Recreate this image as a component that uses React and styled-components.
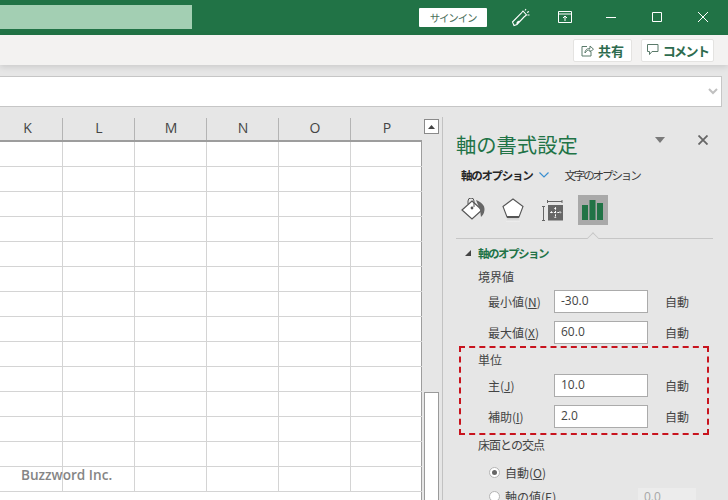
import React from "react";
import styled, { createGlobalStyle } from "styled-components";

const Global = createGlobalStyle`
  html, body { margin: 0; padding: 0; background: #e6e6e6; }
  body { font-family: "Noto Sans CJK JP", "Noto Sans", sans-serif; }
`;
const Page = styled.div`position: relative; width: 728px; height: 500px; overflow: hidden; display: flex; flex-direction: column; background: #e6e6e6;`;
const TitleBar = styled.div`height: 35px; flex: none; background: #217346; display: flex; align-items: center;`;
const SearchBox = styled.div`width: 192px; height: 24px; margin-top: -1px; background: #a3cfb3;`;
const SignIn = styled.div`margin-left: 227px; margin-top: -1px; width: 68px; height: 19px; background: #fff; border-radius: 1px; color: #4b6f5b; font-size: 10.5px; letter-spacing: -1.2px; line-height: 19px; text-align: center;`;
const TitleIcon = styled.svg`flex: none; margin-left: ${p => p.$ml}px; margin-top: -1px; display: block;`;
const Ribbon = styled.div`height: 30px; flex: none; background: #f3f2f1; display: flex; align-items: center; justify-content: flex-end; gap: 9px; padding-right: 14px; box-sizing: border-box; box-shadow: 0 2px 6px rgba(0,0,0,.12); position: relative; z-index: 1;`;
const RibbonButton = styled.div`height: 23px; width: ${p => p.$w}px; box-sizing: border-box; background: #fff; border: 1px solid #e4e3e1; border-radius: 2px; display: flex; align-items: center; justify-content: center; gap: 4px; color: #2d6b4e; font-size: 13px; font-weight: 700; letter-spacing: ${p => p.$ls || 0}px;`;
const FormulaBar = styled.div`height: 31px; flex: none; margin: 11px 6px 0 0; box-sizing: border-box; background: #fff; border: 1px solid #c6c6c6; border-left: 0; display: flex; align-items: center; justify-content: flex-end; padding-right: 3px;`;
const Main = styled.div`flex: 1; display: flex; min-height: 0; margin-top: 10px;`;
const Sheet = styled.div`width: 422px; flex: none; display: flex; flex-direction: column; overflow: hidden;`;
const ColumnHeader = styled.div`height: 25px; flex: none; box-sizing: border-box; display: grid; grid-template-columns: 63px repeat(5, 72px) 71px; background: #e6e6e6; border-bottom: 2px solid #9d9d9d;`;
const ColumnCell = styled.div`box-sizing: border-box; font-family: "Open Sans", sans-serif; font-size: 14px; color: #444; text-align: center; line-height: 22px; position: relative; &:first-child { padding-right: 8px; } &:not(:last-child)::after { content: ""; position: absolute; right: 0; bottom: 0; top: 1px; width: 1px; background: #b4b4b4; }`;
const Grid = styled.div`flex: 1; display: grid; grid-template-columns: 63px repeat(5, 72px) 71px; grid-auto-rows: 25px; background: #fff; border-right: 1px solid #9d9d9d; align-content: start; width: 422px; box-sizing: border-box;`;
const GridCell = styled.div`box-sizing: border-box; border-right: 1px solid #d4d4d4; border-bottom: 1px solid #d4d4d4;`;
const ScrollBar = styled.div`width: 20px; flex: none; box-sizing: border-box; padding: 2px 0 0 2px; display: flex; flex-direction: column; justify-content: space-between;`;
const ScrollButton = styled.div`width: 15px; height: 15px; box-sizing: border-box; background: #fff; border: 1px solid #8a8a8a; display: flex; align-items: center; justify-content: center;`;
const ScrollThumb = styled.div`width: 15px; height: 108px; box-sizing: border-box; background: #fff; border: 1px solid #9a9a9a; border-bottom: 0;`;
const Pane = styled.div`flex: 1; box-sizing: border-box; border-left: 1px solid #c2c2c2; padding: 0 15px 0 13px; display: flex; flex-direction: column; overflow: hidden;`;
const PaneHead = styled.div`height: 36px; margin-top: 9px; flex: none; display: flex; align-items: center;`;
const PaneTitle = styled.div`flex: 1; font-size: 20.3px; line-height: 36px; color: #217346; white-space: nowrap; font-weight: 400;`;
const PaneTabs = styled.div`height: 20px; margin-top: 3px; flex: none; display: flex; align-items: center; padding-left: 5px; font-size: 11.5px; color: #333;`;
const TabActive = styled.div`font-weight: 700; color: #262626; letter-spacing: -1.3px;`;
const TabOther = styled.div`margin-left: 15px; letter-spacing: -2.1px; color: #3a3a3a;`;
const IconRow = styled.div`margin-top: 10px; height: 30px; flex: none; display: flex; align-items: center; padding-left: 2px; gap: 10px;`;
const IconSlot = styled.div`width: 30px; height: 30px; display: flex; align-items: center; justify-content: center; background: ${p => (p.$active ? "#a9a9a9" : "transparent")};`;
const Divider = styled.div`position: relative; margin-top: 13px; height: 1px; flex: none; background: #c6c6c6; width: 257px;
  &::after { content: ""; position: absolute; left: 132px; top: -5px; width: 9px; height: 9px; background: #e6e6e6; border-left: 1px solid #c6c6c6; border-top: 1px solid #c6c6c6; transform: rotate(45deg) scale(.8); }`;
const SectionHead = styled.div`margin-top: 4px; height: 20px; flex: none; display: flex; align-items: center; padding-left: 9px; gap: 7px; color: #217346; font-size: 11.5px; font-weight: 700; letter-spacing: -1.5px;`;
const Label = styled.div`margin: ${p => p.$m || "0"}; padding-left: ${p => p.$pl ?? 22}px; height: 18px; flex: none; line-height: 18px; font-size: 12px; letter-spacing: ${p => p.$ls || 0}px; color: #444;`;
const Row = styled.div`height: 23px; flex: none; display: flex; align-items: center; padding-left: 32px; margin-top: ${p => p.$mt}px; font-size: 12px; color: #444;`;
const RowLabel = styled.div`width: 66px; flex: none; white-space: nowrap; u { text-underline-offset: 1px; }`;
const Field = styled.div`width: 94px; height: 23px; flex: none; box-sizing: border-box; background: #fff; border: 1px solid #ababab; padding-left: 6px; font-family: "Open Sans", sans-serif; font-size: 12px; line-height: 19px; color: #444;`;
const Auto = styled.div`margin-left: 17px; white-space: nowrap;`;
const Highlight = styled.div`margin: 2px 0 0 3px; width: 250px; height: 89px; flex: none; box-sizing: border-box; border: 2px dashed #c8141e; padding-top: 3px; margin-bottom: 0;`;
const HighlightRow = styled(Row)`padding-left: 27px; margin-top: ${p => p.$mt}px;`;
const HighlightLabel = styled(Label)`padding-left: 17px;`;
const RadioRow = styled.div`position: relative; height: 18px; flex: none; display: flex; align-items: center; gap: 5px; padding-left: 33px; margin-top: ${p => p.$mt}px; font-size: 12px; color: #444; u { text-underline-offset: 1px; }`;
const Radio = styled.div`width: 11px; height: 11px; border-radius: 50%; box-sizing: border-box; flex: none; background: #fff; border: 1px solid #b5b5b5; display: flex; align-items: center; justify-content: center; &::after { content: ""; display: ${p => (p.$on ? "block" : "none")}; width: 5px; height: 5px; border-radius: 50%; background: #666; }`;
const RadioText = styled.div`white-space: nowrap;`;
const DisabledField = styled.div`position: absolute; left: 182px; top: 1px; width: 58px; height: 23px; box-sizing: border-box; background: #ececec; padding-left: 6px; color: #a6a6a6; font-family: "Open Sans", sans-serif; font-size: 12px; line-height: 18px;`;
const Watermark = styled.div`position: absolute; left: 21px; top: 466px; font-family: "Open Sans", sans-serif; font-size: 13.6px; font-weight: 600; line-height: 18px; color: #858585;`;

const cols = ["K", "L", "M", "N", "O", "P", ""];
const cells = Array.from({ length: 98 });

export default function App() {
  return (
    <Page>
      <Global />
      <TitleBar>
        <SearchBox />
        <SignIn>サインイン</SignIn>
        <TitleIcon $ml={24} width="20" height="20" viewBox="0 0 20 20" fill="none" stroke="#fff" strokeWidth="1.1">
          <path d="M1.5 15 L10 6.5 L12 4 L15.5 8 L13 10 L6 17.5 L3 18.5 Z M6 17.5 C5.5 15.5 7 14 9.5 14 M14 3.5 L15 2 M16 5.5 L18 4.5 M16.5 8 H18.5" />
        </TitleIcon>
        <TitleIcon $ml={27} width="14" height="12" viewBox="0 0 14 12" fill="none" stroke="#fff" strokeWidth="1">
          <path d="M.5 .5 H13.5 V11.5 H.5 Z M.5 3 H13.5 M7 10 V5 M5 7 L7 5 L9 7" />
        </TitleIcon>
        <TitleIcon $ml={34} width="10" height="10" viewBox="0 0 10 10" stroke="#fff" fill="none"><path d="M0 5.5 H10" /></TitleIcon>
        <TitleIcon $ml={36} width="10" height="10" viewBox="0 0 10 10" stroke="#fff" fill="none"><path d="M.5 .5 H9.5 V9.5 H.5 Z" /></TitleIcon>
        <TitleIcon $ml={36} width="10" height="10" viewBox="0 0 10 10" stroke="#fff" fill="none"><path d="M0 0 L10 10 M10 0 L0 10" /></TitleIcon>
      </TitleBar>
      <Ribbon>
        <RibbonButton $w={59}>
          <svg width="13" height="13" viewBox="0 0 13 13" fill="none" stroke="#5a7a6a" strokeWidth="1"><path d="M6 2.5 H1 V12 H10 V8 M4 9 C4 5 7 4.5 9 4.5 V2 L12.5 5.2 L9 8 V6 C7 6 5.5 6.5 4 9 Z" /></svg>
          共有
        </RibbonButton>
        <RibbonButton $w={73} $ls={-1.6}>
          <svg width="12" height="12" viewBox="0 0 12 12" fill="none" stroke="#5a7a6a" strokeWidth="1"><path d="M.5 .5 H11 V7.5 H5 L2.5 10.5 V7.5 H.5 Z" /></svg>
          コメント
        </RibbonButton>
      </Ribbon>
      <FormulaBar>
        <svg width="10" height="7" viewBox="0 0 10 7" fill="none" stroke="#c0c0c0" strokeWidth="2"><path d="M1 1 L5 5 L9 1" /></svg>
      </FormulaBar>
      <Main>
        <Sheet>
          <ColumnHeader>
            {cols.map((c, i) => <ColumnCell key={i}>{c}</ColumnCell>)}
          </ColumnHeader>
          <Grid>
            {cells.map((_, i) => <GridCell key={i} />)}
          </Grid>
        </Sheet>
        <ScrollBar>
          <ScrollButton>
            <svg width="7" height="4" viewBox="0 0 7 4"><path d="M3.5 0 L7 4 H0 Z" fill="#444" /></svg>
          </ScrollButton>
          <ScrollThumb />
        </ScrollBar>
        <Pane>
          <PaneHead>
            <PaneTitle>軸の書式設定</PaneTitle>
            <svg width="10" height="6" viewBox="0 0 10 6" style={{ marginRight: 33, marginTop: -8 }}><path d="M0 0 H10 L5 6 Z" fill="#7a7a7a" /></svg>
            <svg width="10" height="10" viewBox="0 0 10 10" fill="none" stroke="#666" strokeWidth="1.8" style={{ marginRight: 5, marginTop: -8 }}><path d="M.5 .5 L9.5 9.5 M9.5 .5 L.5 9.5" /></svg>
          </PaneHead>
          <PaneTabs>
            <TabActive>軸のオプション</TabActive>
            <svg width="10" height="6" viewBox="0 0 10 6" fill="none" stroke="#3a8fd0" strokeWidth="1.2" style={{ marginLeft: 7 }}><path d="M.5 .5 L5 5 L9.5 .5" /></svg>
            <TabOther>文字のオプション</TabOther>
          </PaneTabs>
          <IconRow>
            <IconSlot>
              <svg width="26" height="24" viewBox="0 0 26 24">
                <path d="M12 3 L22 12 L12 21 L2 12 Z" fill="#fff" stroke="#555" strokeWidth="1.2" />
                <path d="M8 6 V3 A3 3 0 0 1 14 3 V9" fill="none" stroke="#555" strokeWidth="1" />
                <circle cx="12" cy="10" r="1.4" fill="#555" />
                <path d="M16 2 C21 4 25 7 24.5 12 C24.2 16 22 18 21 19 L20 12 Z" fill="#666" />
              </svg>
            </IconSlot>
            <IconSlot>
              <svg width="24" height="26" viewBox="0 0 24 26">
                <defs>
                  <linearGradient id="shade" x1="0" y1="0" x2="0" y2="1"><stop offset="0" stopColor="#c4c4c4" /><stop offset="1" stopColor="#f0f0f0" /></linearGradient>
                </defs>
                <path d="M7 20 L5 25 H19 L17 20 Z" fill="url(#shade)" />
                <path d="M12 2 L22 9.5 L18 20 H6 L2 9.5 Z" fill="#fff" stroke="#555" strokeWidth="1.1" />
                <path d="M6 20 H18" stroke="#555" strokeWidth="2" />
              </svg>
            </IconSlot>
            <IconSlot>
              <svg width="24" height="24" viewBox="0 0 24 24">
                <path d="M6.5 2 V5 M6.5 3.5 H21 M21 2 V5 M1 8.5 H4 M2.5 8.5 V22.5 M1 22.5 H4" stroke="#666" fill="none" />
                <rect x="7" y="7" width="15" height="15.5" fill="#666" />
                <path d="M14.5 9.5 V20 M9.5 14.5 H20 M13.3 10.8 L14.5 9.5 L15.7 10.8 M13.3 18.8 L14.5 20 L15.7 18.8 M10.8 13.3 L9.5 14.5 L10.8 15.7 M18.8 13.3 L20 14.5 L18.8 15.7" stroke="#fff" fill="none" strokeDasharray="2.2 1.2" />
              </svg>
            </IconSlot>
            <IconSlot $active>
              <svg width="22" height="22" viewBox="0 0 22 22" fill="#217346">
                <rect x="0" y="6" width="6" height="15" />
                <rect x="7.5" y="1" width="6" height="20" />
                <rect x="15" y="4" width="6" height="17" />
              </svg>
            </IconSlot>
          </IconRow>
          <Divider />
          <SectionHead>
            <svg width="6" height="6" viewBox="0 0 6 6"><path d="M6 0 V6 H0 Z" fill="#444" /></svg>
            軸のオプション
          </SectionHead>
          <Label $m="5px 0 0 0">境界値</Label>
          <Row $mt={4}><RowLabel>最小値(<u>N</u>)</RowLabel><Field>-30.0</Field><Auto>自動</Auto></Row>
          <Row $mt={8}><RowLabel>最大値(<u>X</u>)</RowLabel><Field>60.0</Field><Auto>自動</Auto></Row>
          <Highlight>
            <HighlightLabel>単位</HighlightLabel>
            <HighlightRow $mt={5}><RowLabel>主(<u>J</u>)</RowLabel><Field>10.0</Field><Auto>自動</Auto></HighlightRow>
            <HighlightRow $mt={8}><RowLabel>補助(<u>I</u>)</RowLabel><Field>2.0</Field><Auto>自動</Auto></HighlightRow>
          </Highlight>
          <Label $m="1px 0 0 0" $ls={-1}>床面との交点</Label>
          <RadioRow $mt={9}><Radio $on /><RadioText>自動(<u>O</u>)</RadioText></RadioRow>
          <RadioRow $mt={6}><Radio /><RadioText>軸の値(<u>E</u>)</RadioText><DisabledField>0.0</DisabledField></RadioRow>
        </Pane>
      </Main>
      <Watermark>Buzzword Inc.</Watermark>
    </Page>
  );
}
